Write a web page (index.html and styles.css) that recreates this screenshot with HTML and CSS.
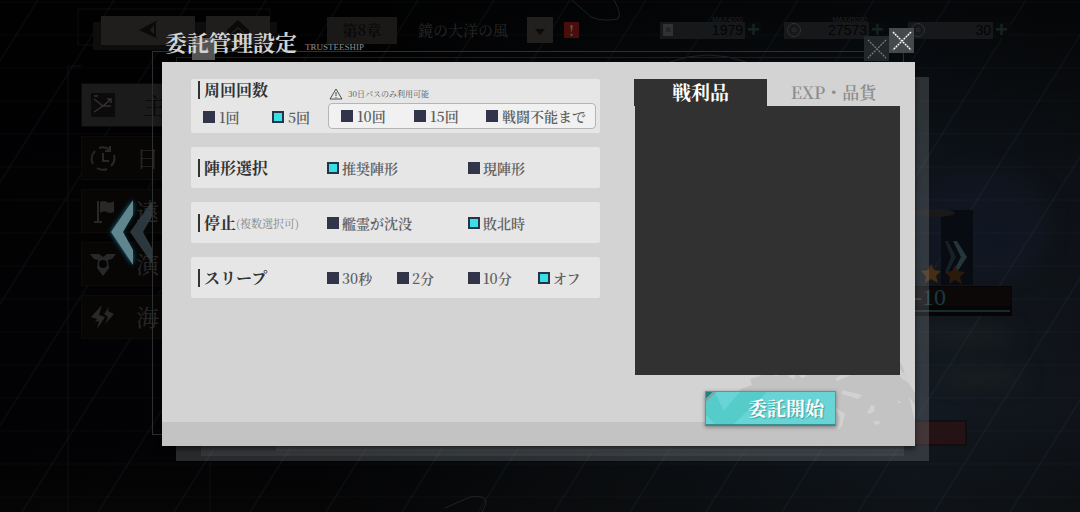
FILE: index.html
```html
<!DOCTYPE html>
<html lang="ja">
<head>
<meta charset="utf-8">
<meta name="viewport" content="width=device-width, initial-scale=1">
<title>委託管理設定</title>
<link rel="stylesheet" href="styles.css">
</head>
<body>
<div class="stage">
  <svg class="scenery" viewBox="0 0 1080 512" preserveAspectRatio="xMidYMid slice" aria-hidden="true">
    <defs>
      <linearGradient id="night" x1="0" y1="0" x2="1" y2="0">
        <stop offset="0" stop-color="#020204"/><stop offset=".3" stop-color="#030305"/>
        <stop offset=".6" stop-color="#0c1014"/><stop offset=".85" stop-color="#121921"/><stop offset="1" stop-color="#101419"/>
      </linearGradient>
      <linearGradient id="sky" x1="0" y1="0" x2="0" y2="1">
        <stop offset="0" stop-color="#000" stop-opacity=".75"/><stop offset=".35" stop-color="#000" stop-opacity=".2"/>
        <stop offset=".8" stop-color="#000" stop-opacity="0"/><stop offset="1" stop-color="#0a0a09" stop-opacity=".4"/>
      </linearGradient>
      <filter id="soft" x="-.5" y="-1" width="2" height="3" color-interpolation-filters="sRGB"><feGaussianBlur stdDeviation="10"/></filter>
      <pattern id="mesh" width="76" height="33" patternUnits="userSpaceOnUse" patternTransform="skewX(-32)">
        <path d="M0 2H76" fill="none" stroke="#5f7f8c" stroke-opacity=".05"/>
        <path d="M38 0V33" fill="none" stroke="#5f7f8c" stroke-opacity=".12"/>
      </pattern>
    </defs>
    <rect width="1080" height="512" fill="url(#night)"/>
    <g filter="url(#soft)">
      <ellipse cx="985" cy="225" rx="65" ry="55" fill="#151e31" opacity=".5"/>
      <ellipse cx="965" cy="335" rx="50" ry="7" fill="#1c2322"/>
      <ellipse cx="980" cy="376" rx="45" ry="7" fill="#1c2322"/>
    </g>
    <rect width="1080" height="512" fill="url(#sky)"/>
    <rect width="1080" height="512" fill="url(#mesh)"/>
    <g fill="none" stroke="#26323a" stroke-opacity=".65">
      <path d="M572 0l19 17q11 5 27 2 4-5-4-19M670 62q38-14 76 0M445 508l25-11q17-3 16 7l-4 8"/>
      <path d="M68 512V66M78 45V9H270V20M210 512V462" stroke="#17171c"/>
      <path d="M68 66H82M78 45H101" stroke="#17171c"/>
    </g>
    <rect x="93" y="22" width="184" height="28" fill="#0d0d0e"/>
    <rect x="941" y="210" width="32" height="75" fill="#080b11"/>
    <ellipse cx="935" cy="213" rx="20" ry="4" fill="#1b1819"/>
    <path d="M957 241l10 16-10 15-4 0 8-15-8-16z" fill="#24363c"/>
    <path d="M948 241l8 16-8 15-3 0 6-15-6-16z" fill="#162026"/>
    <path d="M931 264l3 6 7 1-5 5 2 7-7-4-6 4 1-7-5-5 7-1z" fill="#472d12"/>
    <path d="M955 265l3 6 7 1-5 5 2 7-7-4-6 4 1-7-5-5 7-1z" fill="#2b1a0c"/>
    <rect x="890" y="286" width="122" height="30" fill="#060404"/>
    <rect x="890" y="287" width="121" height="19" fill="#0d0808"/>
    <path d="M890 311H1010" stroke="#152b2e" stroke-width="2"/>
    <text class="scenery-rank" x="914" y="305">-10</text>
    <rect x="880" y="421" width="86" height="24" fill="#251214" stroke="#0c0708"/>
  </svg>

  <header class="topbar">
    <button class="nav-btn nav-back" aria-label="戻る"><svg viewBox="0 0 22 20"><path d="M21 0L2 10l19 9-8-9z" fill="currentColor"/><path d="M18 3v13" stroke="currentColor" stroke-width="2"/></svg></button>
    <button class="nav-btn nav-home" aria-label="ホーム"><svg viewBox="0 0 22 20"><path d="M0 10L11 0l11 10v3h-4l-7-6-7 6H0z" fill="currentColor"/><path d="M4 15l7-6 7 6v4h-4l-3-3-3 3H4z" fill="currentColor"/></svg></button>
    <button class="chapter">第8章</button>
    <span class="chapter-name">鏡の大洋の風</span>
    <button class="chapter-more" aria-label="章を選択"><svg viewBox="0 0 10 8"><path d="M0 1h10L5 7z" fill="currentColor"/></svg></button>
    <span class="alert">!</span>
    <div class="resources">
      <div class="resource"><span class="resource-icon">«</span><span class="resource-max">MAX4000</span><span class="resource-value">1979</span><button class="plus" aria-label="追加">+</button></div>
      <div class="resource"><span class="resource-icon round">«</span><span class="resource-max">MAX45000</span><span class="resource-value">27573</span><button class="plus" aria-label="追加">+</button></div>
      <div class="resource"><span class="resource-icon round">«</span><span class="resource-value">30</span><button class="plus" aria-label="追加">+</button></div>
    </div>
  </header>

  <nav class="side">
    <button class="side-item current"><svg viewBox="0 0 26 26"><path d="M1 1h24v24H1z" fill="#0c0b0b"/><path d="M4 7l9 7 8-7M4 20l9-6h8M17 7h4v4M4 4h4" fill="none" stroke="#34302f" stroke-width="1.5"/></svg><span>主</span></button>
    <button class="side-item"><svg viewBox="0 0 26 26"><g fill="none" stroke="currentColor" stroke-width="2"><path d="M9 3a11 11 0 0 1 11 2M24 10a11 11 0 0 1-3 11M17 24a11 11 0 0 1-10-1M3 19a11 11 0 0 1 2-13M13 8v8h6M20 1v5h-5"/></g></svg><span>日</span></button>
    <button class="side-item"><svg viewBox="0 0 26 26"><path d="M7 3h2v21H7zM10 4q4-2 7 0t7-1v11q-4 2-7 0t-7 1zM4 23h8v2H4z" fill="currentColor"/></svg><span>遠</span></button>
    <button class="side-item"><svg viewBox="0 0 26 26"><path d="M0 3h9l4 3 4-3h9l-4 5-4 1 1 8-6 8-6-8 1-8-4-1z" fill="currentColor"/><circle cx="13" cy="13" r="4" fill="#060505"/></svg><span>演</span></button>
    <button class="side-item"><svg viewBox="0 0 26 26"><path d="M12 1L1 13l6 2-2 3 4-1-2 8 8-12-6-2zM19 3l-5 7 4 3-3 7 9-10-6-3z" fill="currentColor"/></svg><span>海</span></button>
  </nav>

  <svg class="chevrons" viewBox="0 0 60 90" aria-hidden="true">
    <defs><filter id="glow" x="-.4" y="-.3" width="1.8" height="1.6"><feGaussianBlur stdDeviation="2.5"/></filter></defs>
    <path d="M30 12L8 44l22 33V65L18 44l12-20z" fill="#1a6f92" filter="url(#glow)"/>
    <path d="M50 12L27 44l23 33V62L40 44l10-17z" fill="#334048" opacity=".85"/>
    <path d="M30 12L8 44l22 33V62L20 44l10-17z" fill="#5f858d"/>
  </svg>

  <main class="layer">
    <section class="window" aria-labelledby="win-title">
      <header class="window-head">
        <h1 id="win-title">委託管理設定</h1>
        <span class="window-sub">TRUSTEESHIP</span>
        <button class="close" aria-label="閉じる"><svg viewBox="0 0 25 25"><path d="M4 4l18 18M22 4L4 22" stroke="#fff" stroke-width="1.4" stroke-dasharray="2 .8"/></svg></button>
        <svg class="close-ghost" viewBox="0 0 25 25" aria-hidden="true"><path d="M4 4l18 18M22 4L4 22" stroke="#7c8082" stroke-width="1.2" stroke-dasharray="2 1"/></svg>
      </header>

      <div class="sheet">
        <svg class="splash" viewBox="0 0 175 100" aria-hidden="true">
          <path d="M2 76L8 46l-10-2 14-5-2-6 10-3 8-6h24l10 8 3-1 7-9 12-3 60-16q18 11 20 22l3 10 8 12v12l-6-8 6 24v25H0z" fill="#c3c3c3"/>
          <path d="M48 30l6-10 4-2-4 16zM34 29l4-4-1 6zM102 44l20 5-4 4-16-5zM94 60l6 12-2 12 4-4 3-12zM127 67l4-8 4 1-1 6-5 2zM133 75h6l1 3-4 1zM98 35l-3-2 18-13 14 9-12-2zM153 18l12 10 8 12-12-8zM158 54l4 3h-4z" fill="#d1d1d1"/>
        </svg>

        <form class="settings" id="settings">
          <fieldset class="panel panel-runs">
            <div class="runs-free">
              <h2>周回回数</h2>
              <div class="runs-row">
                <label class="option"><input type="radio" name="runs">1回</label>
                <label class="option"><input type="radio" name="runs" checked>5回</label>
              </div>
            </div>
            <div class="runs-pass">
              <p class="note"><svg viewBox="0 0 14 12"><path d="M7 1l6 10H1zM7 4v4M7 9v1" fill="none" stroke="currentColor"/></svg>30日パスのみ利用可能</p>
              <div class="pass-box">
                <label class="option"><input type="radio" name="runs">10回</label>
                <label class="option"><input type="radio" name="runs">15回</label>
                <label class="option"><input type="radio" name="runs">戦闘不能まで</label>
              </div>
            </div>
          </fieldset>

          <fieldset class="panel">
            <h2>陣形選択</h2>
            <label class="option wide"><input type="radio" name="formation" checked>推奨陣形</label>
            <label class="option wide"><input type="radio" name="formation">現陣形</label>
          </fieldset>

          <fieldset class="panel">
            <h2>停止<small>(複数選択可)</small></h2>
            <label class="option wide"><input type="checkbox" name="sunk">艦霊が沈没</label>
            <label class="option wide"><input type="checkbox" name="defeat" checked>敗北時</label>
          </fieldset>

          <fieldset class="panel">
            <h2>スリープ</h2>
            <label class="option"><input type="radio" name="sleep">30秒</label>
            <label class="option"><input type="radio" name="sleep">2分</label>
            <label class="option"><input type="radio" name="sleep">10分</label>
            <label class="option"><input type="radio" name="sleep" checked>オフ</label>
          </fieldset>
        </form>

        <div class="loot">
          <div class="tabs" role="tablist">
            <button class="tab active" role="tab" aria-selected="true">戦利品</button>
            <button class="tab" role="tab" aria-selected="false">EXP・品貨</button>
          </div>
          <div class="loot-body" role="tabpanel"></div>
          <button class="start" form="settings">
            <svg class="start-art" viewBox="0 0 131 35" preserveAspectRatio="xMinYMid slice" aria-hidden="true">
              <path d="M0 0H8L18 20 36 0H63L27 35H10L0 24z" fill="#55cbca"/>
              <path d="M0 0h8L0 8z" fill="#257f80"/><path d="M10 0L0 10" stroke="#8f9c9c" stroke-width="2"/>
            </svg>
            <span>委託開始</span>
          </button>
        </div>
      </div>
    </section>
  </main>
</div>
</body>
</html>
```
FILE: styles.css
```css
* { box-sizing: border-box; }

body {
  margin: 0;
  background: #030305;
  font-family: "Noto Serif CJK JP", "Liberation Serif", "Noto Sans CJK JP", serif;
}

button {
  border: 0;
  padding: 0;
  font: inherit;
  color: inherit;
  background: none;
}

h1, h2, p { margin: 0; }

.stage {
  position: relative;
  min-height: 100vh;
  overflow: hidden;
}

.scenery {
  position: absolute;
  inset: 0;
  width: 100%;
  height: 100%;
}

.scenery-rank {
  font-family: "Liberation Serif", serif;
  font-size: 24px;
  fill: #173b40;
}

/* Dimmed game screen */
.topbar {
  position: relative;
  display: flex;
  align-items: center;
  height: 46px;
  padding: 14px 0 0 101px;
  color: #0a0a0b;
}

.nav-btn {
  display: flex;
  align-items: center;
  justify-content: center;
  height: 29px;
  background: #1f1e1d;
}

.nav-btn svg { width: 22px; height: 20px; }
.nav-back { width: 94px; }
.nav-home { width: 64px; margin-left: 11px; }

.chapter {
  width: 70px;
  height: 27px;
  margin-left: 57px;
  font-size: 15px;
  font-weight: bold;
  line-height: 26px;
  background: #1a1918;
}

.chapter-name {
  margin-left: 21px;
  font-size: 15px;
  line-height: 28px;
  white-space: nowrap;
  color: #292725;
}

.chapter-more {
  width: 26px;
  height: 26px;
  margin-left: 19px;
  background: #22201e;
  line-height: 20px;
}

.chapter-more svg { width: 10px; height: 8px; }

.alert {
  width: 15px;
  height: 16px;
  margin-left: 11px;
  background: #4a0d0d;
  color: #66503a;
  font-size: 14px;
  font-weight: bold;
  line-height: 16px;
  text-align: center;
}

.resources {
  display: flex;
  gap: 22px;
  margin-left: 81px;
}

.resource {
  position: relative;
  display: flex;
  align-items: center;
  width: 102px;
  height: 17px;
  background: linear-gradient(#16181a, #16181a) 0 0 / 85px 100% no-repeat #08090b;
  font-family: "Liberation Sans", sans-serif;
}

.resource-icon {
  width: 10px;
  height: 12px;
  margin-left: 3px;
  background: #303234;
  color: #101214;
  font-size: 10px;
  line-height: 10px;
  text-align: center;
  writing-mode: vertical-rl;
}

.resource-icon.round {
  width: 14px;
  height: 14px;
  border: 1px solid #303234;
  border-radius: 50%;
  background: none;
  color: #303234;
  line-height: 12px;
}

.resource-max {
  position: absolute;
  top: -6px;
  right: 19px;
  font-size: 7px;
  line-height: 7px;
  color: #222527;
}

.resource-value {
  flex: 1;
  padding-right: 2px;
  font-size: 14px;
  line-height: 17px;
  text-align: right;
  color: #040506;
}

.plus {
  width: 17px;
  height: 17px;
  font-size: 22px;
  font-weight: bold;
  line-height: 16px;
  color: #16221f;
}

.side {
  position: relative;
  display: flex;
  flex-direction: column;
  gap: 9px;
  width: 220px;
  padding: 37px 0 0 81px;
}

.side-item {
  display: flex;
  align-items: center;
  gap: 20px;
  height: 44px;
  padding-left: 8px;
  border: 1px solid #0c0b09;
  background: #070605;
  color: #282828;
  font-size: 23px;
  line-height: 40px;
}

.side-item svg { width: 26px; height: 26px; }
.side-item.current { gap: 27px; background: #1c1b1b; color: #090808; }

.chevrons {
  position: absolute;
  left: 103px;
  top: 188px;
  width: 60px;
  height: 90px;
}

/* Settings window */
.layer {
  position: absolute;
  inset: 0;
  padding: 28px 165px 0 162px;
}

.window { position: relative; }

.window-head {
  position: relative;
  display: flex;
  align-items: flex-start;
  height: 34px;
  padding-left: 3px;
}

.window-head::before,
.window-head::after {
  content: "";
  position: absolute;
}

.window-head::before {
  inset: 29px 36px 0 14px;
  border: 1px solid #1a1e21;
  border-bottom: 0;
}

.window-head::after {
  inset: 23px 11px -373px -10px;
  border: 1px solid #2c3033;
}

.window-head h1 {
  position: relative;
  z-index: 1;
  font-size: 22px;
  line-height: 28px;
  white-space: nowrap;
  color: #d3d3d3;
  font-weight: bold;
}

.window-head h1::before {
  content: "";
  position: absolute;
  z-index: -1;
  left: 27px;
  top: 10px;
  width: 23px;
  height: 22px;
  background: #555;
}

.window-sub {
  position: relative;
  z-index: 1;
  margin: 14px 0 0 8px;
  font-family: "Liberation Serif", serif;
  font-size: 9px;
  line-height: 10px;
  color: #8d8f90;
}

.close {
  position: relative;
  z-index: 1;
  order: 2;
  width: 25px;
  height: 25px;
  margin-right: 1px;
  background: #45494b;
}

.close svg { display: block; }

.close-ghost {
  position: relative;
  z-index: 1;
  width: 25px;
  height: 25px;
  margin: 8px 0 0 auto;
  background: #22272a;
}

.sheet {
  position: relative;
  z-index: 1;
  display: grid;
  grid-template-columns: minmax(0, 409fr) minmax(0, 266fr);
  gap: 34px;
  padding: 17px 15px 20px 29px;
  background: linear-gradient(to top, #c3c3c3 24px, #d3d3d3 24px);
  box-shadow: 0 3px 5px #0008;
}

/* Stacked translucent plates behind the sheet */
.window::before,
.window::after {
  content: "";
  position: absolute;
  background: #8f969a44;
}

.window::before { inset: 49px -14px -15px 14px; }

.window::after {
  inset: 120px 11px -10px 39px;
  background:
    linear-gradient(#8f969a22, #8f969a22) 75px -5px no-repeat,
    #8f969a22;
}

.splash {
  position: absolute;
  right: 0;
  bottom: 0;
  width: 175px;
  height: 100px;
}

.settings {
  position: relative;
  display: flex;
  flex-direction: column;
  gap: 14px;
}

.panel {
  display: grid;
  grid-template-columns: 129px 70px 71px 70px 1fr;
  grid-auto-rows: minmax(41px, auto);
  align-items: center;
  min-width: 0;
  margin: 0;
  padding: 0 0 0 7px;
  border: 0;
  border-radius: 2px;
  background: #e6e6e6;
}

.panel h2 {
  display: flex;
  align-items: center;
  height: 18px;
  padding-left: 4px;
  border-left: 2px solid #333;
  font-size: 16px;
  line-height: 18px;
  white-space: nowrap;
  color: #333;
}

.panel h2 small {
  font-size: 11px;
  font-weight: normal;
  color: #858585;
}

.option {
  display: flex;
  align-items: center;
  gap: 3px;
  font-size: 14px;
  font-weight: 600;
  line-height: 20px;
  white-space: nowrap;
  color: #5f5f5f;
}

.option.wide { grid-column: span 2; }

.option input {
  appearance: none;
  flex: none;
  width: 12px;
  height: 12px;
  margin: 0;
  border: 2px solid #32354a;
  background: #32354a;
}

.option input:checked { background: #39dfe2; border-color: #26344a; }

.panel-runs {
  grid-template-columns: 130px 1fr;
  padding-right: 4px;
}

.panel-runs .option { gap: 4px; }

.runs-free {
  padding: 2px 0 6px;
}

.runs-row {
  display: grid;
  grid-template-columns: 69px 1fr;
  padding: 8px 0 0 5px;
}

.note {
  display: flex;
  align-items: center;
  gap: 5px;
  padding: 9px 0 3px 1px;
  font-size: 8px;
  line-height: 12px;
  color: #4f4f4f;
}

.note svg { width: 14px; height: 12px; }

.pass-box {
  display: grid;
  grid-template-columns: 73px 72px 1fr;
  margin-bottom: 4px;
  padding: 2px 0 2px 12px;
  border: 1px solid #b5b5b5;
  border-radius: 4px;
  background: #f1f1f1;
}

.loot {
  position: relative;
  display: flex;
  flex-direction: column;
}

.tabs {
  display: grid;
  grid-template-columns: 1fr 1fr;
}

.tab {
  height: 27px;
  padding-bottom: 2px;
  font-size: 17px;
  font-weight: 600;
  line-height: 24px;
  color: #8d8d8d;
  white-space: nowrap;
}

.tab.active {
  background: #313131;
  color: #fff;
  font-size: 19px;
  font-weight: bold;
}

.loot-body {
  min-height: 269px;
  margin-left: 1px;
  background: #313131;
}

.start {
  position: relative;
  align-self: flex-start;
  width: 131px;
  height: 35px;
  margin: 16px 0 0 71px;
  padding-right: 11px;
  border: 1px solid #549a9b;
  border-bottom: 2px solid #37908f;
  background: #68d4d5;
  box-shadow: 0 1px 4px #0006;
  color: #fff;
  font-size: 19px;
  font-weight: bold;
  line-height: 28px;
  text-align: right;
  text-shadow: 1px 1px 1px #3a9c9c;
}

.start-art {
  position: absolute;
  inset: 0;
  width: 100%;
  height: 100%;
}

.start span { position: relative; }
```
